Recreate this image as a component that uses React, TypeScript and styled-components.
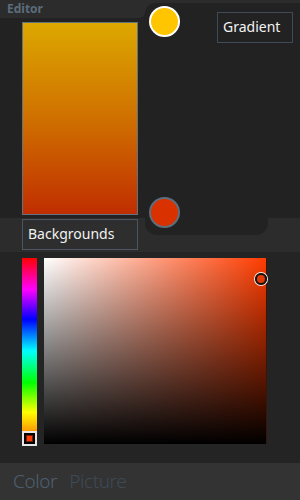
import React from "react";
import styled, { createGlobalStyle } from "styled-components";

const Global = createGlobalStyle`
  html, body { margin: 0; padding: 0; background: #222222; }
  * { box-sizing: border-box; }
`;

const FONT = `"Noto Sans", "Open Sans", "DejaVu Sans", sans-serif`;
const BAND = "#2c2c2c";
const DARK = "#222222";

const Page = styled.div`
  width: 300px;
  height: 500px;
  display: flex;
  flex-direction: column;
  background: ${DARK};
  font-family: ${FONT};
  overflow: hidden;
`;

const Top = styled.div`
  display: flex;
  height: 218px;
`;

const LeftCol = styled.div`
  width: 145px;
  display: flex;
  flex-direction: column;
`;

const EditorTab = styled.div`
  height: 18px;
  background: ${BAND};
  border-bottom-right-radius: 6px;
  padding-left: 7px;
  font-size: 12px;
  font-weight: 700;
  line-height: 17px;
  color: #5b6c7c;
`;

const PreviewWrap = styled.div`
  padding: 4px 0 0 22px;
`;

const Preview = styled.div`
  width: 116px;
  height: 193px;
  border: 1px solid #62727f;
  background: linear-gradient(to bottom, #dca800, #cf7000 50%, #c02e00);
`;

const RightCol = styled.div`
  flex: 1;
  background: ${BAND};
  display: flex;
  flex-direction: column;
`;

const Notch = styled.div`
  margin-top: 3px;
  flex: 1;
  background: ${DARK};
  border-top-left-radius: 10px;
  display: flex;
  flex-direction: column;
  justify-content: space-between;
  padding: 3px 7px 0 4px;
`;

const TopRow = styled.div`
  display: flex;
  justify-content: space-between;
  align-items: flex-start;
`;

const Stop = styled.div<{ $fill: string; $ring: string; $overlap?: boolean }>`
  width: 31px;
  height: 31px;
  border-radius: 50%;
  background: ${(p) => p.$fill};
  border: 2px solid ${(p) => p.$ring};
  position: relative;
  z-index: 2;
  margin-bottom: ${(p) => (p.$overlap ? "-10px" : "0")};
`;

const TextButton = styled.div<{ $w: number }>`
  width: ${(p) => p.$w}px;
  height: 31px;
  border: 1px solid #3f4b56;
  color: #f2f2f2;
  font-size: 14px;
  line-height: 28px;
  padding-left: 5px;
  white-space: nowrap;
`;

const GradientButton = styled(TextButton)`
  margin-top: 6px;
  background: transparent;
`;

const Band = styled.div`
  height: 34px;
  background: ${BAND};
  display: flex;
`;

const BandLeft = styled.div`
  width: 145px;
  padding: 1px 0 0 22px;
`;

const BackgroundsButton = styled(TextButton)`
  border-color: #4a5661;
  background: #2e2e2e;
`;

const BandNotch = styled.div`
  width: 123px;
  height: 17px;
  background: ${DARK};
  border-bottom-left-radius: 12px;
  border-bottom-right-radius: 12px;
`;

const Picker = styled.div`
  flex: 1;
  background: #242424;
  display: flex;
  gap: 7px;
  padding: 6px 0 0 22px;
`;

const HueBar = styled.div`
  width: 15px;
  height: 186px;
  display: flex;
  flex-direction: column;
  justify-content: flex-end;
  background: linear-gradient(
    to bottom,
    #ff0000 0%,
    #ff00ff 17%,
    #0000ff 33%,
    #00ffff 50%,
    #00ff00 67%,
    #ffff00 83%,
    #ff5500 100%
  );
`;

const HueThumb = styled.div`
  width: 15px;
  height: 15px;
  margin-bottom: -2px;
  border: 2px solid #e6e6e6;
  background: #000;
  padding: 2px;
`;

const HueSwatch = styled.div<{ $c: string }>`
  width: 100%;
  height: 100%;
  background: ${(p) => p.$c};
  border: 1px solid #7a1a00;
`;

const SVArea = styled.div<{ $hue: string }>`
  position: relative;
  width: 223px;
  height: 186px;
  border-right: 1px solid #3a1508;
  background: linear-gradient(to top, #000000, rgba(0, 0, 0, 0)),
    linear-gradient(to right, #ffffff, ${(p) => p.$hue});
`;

const SVThumb = styled.div`
  position: absolute;
  width: 12px;
  height: 12px;
  margin: -6px 0 0 -6px;
  border-radius: 50%;
  border: 2px solid #111;
  box-shadow: 0 0 0 1px #f0f0f0;
`;

const BottomBar = styled.div`
  height: 37px;
  background: #333333;
  display: flex;
  gap: 12px;
  padding-left: 13px;
  font-size: 19px;
  font-weight: 300;
  letter-spacing: -0.4px;
  line-height: 36px;
`;

const Tab = styled.div<{ $active?: boolean }>`
  color: ${(p) => (p.$active ? "#4e6070" : "#3d4a56")};
`;

export default function App() {
  const hue = "#ff3c00";
  return (
    <Page>
      <Global />
      <Top>
        <LeftCol>
          <EditorTab>Editor</EditorTab>
          <PreviewWrap>
            <Preview />
          </PreviewWrap>
        </LeftCol>
        <RightCol>
          <Notch>
            <TopRow>
              <Stop $fill="#fec500" $ring="#ffffff" />
              <GradientButton $w={76}>Gradient</GradientButton>
            </TopRow>
            <Stop $fill="#d93200" $ring="#5e6e7d" $overlap />
          </Notch>
        </RightCol>
      </Top>
      <Band>
        <BandLeft>
          <BackgroundsButton $w={116}>Backgrounds</BackgroundsButton>
        </BandLeft>
        <BandNotch />
      </Band>
      <Picker>
        <HueBar>
          <HueThumb>
            <HueSwatch $c={hue} />
          </HueThumb>
        </HueBar>
        <SVArea $hue={hue}>
          <SVThumb style={{ left: 217, top: 21 }} />
        </SVArea>
      </Picker>
      <BottomBar>
        <Tab $active>Color</Tab>
        <Tab>Picture</Tab>
      </BottomBar>
    </Page>
  );
}
